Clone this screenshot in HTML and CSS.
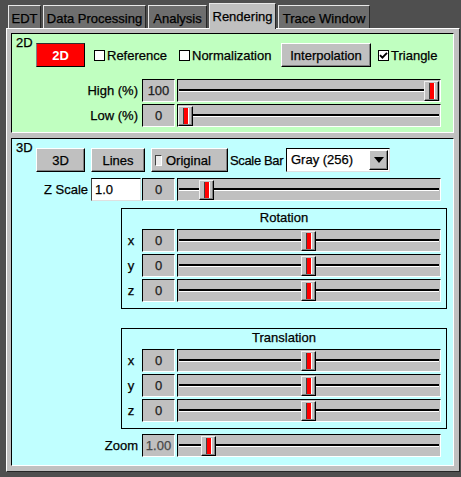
FILE: index.html
```html
<!DOCTYPE html>
<html>
<head>
<meta charset="utf-8">
<title>Rendering</title>
<link rel="stylesheet" href="styles.css">
</head>
<body>
<div class="tabs">
  <div class="tab w-edt">EDT</div>
  <div class="tab w-dp">Data Processing</div>
  <div class="tab w-an">Analysis</div>
  <div class="tab active w-re">Rendering</div>
  <div class="tab w-tw">Trace Window</div>
</div>
<div class="content">
  <section class="panel p2d">
    <div class="toprow">
      <div class="ptitle">2D</div>
      <div class="controls">
        <div class="btn red w-2d">2D</div>
        <label class="chk w-ref"><span class="box"></span>Reference</label>
        <label class="chk w-norm"><span class="box"></span>Normalization</label>
        <div class="btn w-interp">Interpolation</div>
        <label class="chk ml7"><span class="box"><svg width="9" height="9" viewBox="0 0 9 9"><path d="M1 4.2 L3.4 6.6 L8 1.8" fill="none" stroke="#000" stroke-width="1.9"/></svg></span>Triangle</label>
      </div>
    </div>
    <div class="rows mt12">
      <div class="srow">
        <span class="lbl wide">High (%)</span>
        <span class="val">100</span>
        <div class="slider"><div class="track"></div><div class="thumb" style="left:246px"><i></i></div></div>
      </div>
      <div class="srow">
        <span class="lbl wide">Low (%)</span>
        <span class="val">0</span>
        <div class="slider"><div class="track"></div><div class="thumb" style="left:0px"><i></i></div></div>
      </div>
    </div>
  </section>

  <section class="panel p3d">
    <div class="toprow">
      <div class="ptitle">3D</div>
      <div class="controls">
        <div class="btn w-3d">3D</div>
        <div class="btn w-lines ml6">Lines</div>
        <div class="btn w-orig ml6 orig"><span class="ind"></span>Original</div>
        <span class="sblabel">Scale Bar</span>
        <div class="select"><span class="seltext">Gray (256)</span><span class="selbtn"><span class="tri"></span></span></div>
      </div>
    </div>

    <div class="srow mt6">
      <span class="lbl zl">Z Scale</span>
      <span class="input">1.0</span>
      <span class="val">0</span>
      <div class="slider"><div class="track"></div><div class="thumb" style="left:21px"><i></i></div></div>
    </div>

    <div class="group mt7">
      <div class="gtitle">Rotation</div>
      <div class="rows">
        <div class="srow">
          <span class="lbl axis">x</span>
          <span class="val">0</span>
          <div class="slider"><div class="track"></div><div class="thumb" style="left:123px"><i></i></div></div>
        </div>
        <div class="srow">
          <span class="lbl axis">y</span>
          <span class="val">0</span>
          <div class="slider"><div class="track"></div><div class="thumb" style="left:123px"><i></i></div></div>
        </div>
        <div class="srow">
          <span class="lbl axis">z</span>
          <span class="val">0</span>
          <div class="slider"><div class="track"></div><div class="thumb" style="left:123px"><i></i></div></div>
        </div>
      </div>
    </div>

    <div class="group mt19">
      <div class="gtitle">Translation</div>
      <div class="rows">
        <div class="srow">
          <span class="lbl axis">x</span>
          <span class="val">0</span>
          <div class="slider"><div class="track"></div><div class="thumb" style="left:123px"><i></i></div></div>
        </div>
        <div class="srow">
          <span class="lbl axis">y</span>
          <span class="val">0</span>
          <div class="slider"><div class="track"></div><div class="thumb" style="left:123px"><i></i></div></div>
        </div>
        <div class="srow">
          <span class="lbl axis">z</span>
          <span class="val">0</span>
          <div class="slider"><div class="track"></div><div class="thumb" style="left:123px"><i></i></div></div>
        </div>
      </div>
    </div>

    <div class="srow mt5">
      <span class="lbl wide">Zoom</span>
      <span class="val dim">1.00</span>
      <div class="slider"><div class="track"></div><div class="thumb" style="left:23px"><i></i></div></div>
    </div>
  </section>
</div>
</body>
</html>
```

FILE: styles.css
```css
* { box-sizing: border-box; }
html, body { margin: 0; padding: 0; }
body {
  width: 461px;
  height: 477px;
  overflow: hidden;
  background: #4f4f4f;
  font: 13px/15px "Liberation Sans", Arial, sans-serif;
  color: #000;
  -webkit-text-stroke: 0.25px currentColor;
}

/* tabs */
.tabs {
  display: flex;
  align-items: flex-end;
  gap: 2px;
  height: 28px;
  padding-left: 8px;
}
.tab {
  height: 23px;
  padding-top: 5px;
  text-align: center;
  white-space: nowrap;
  background: #6e6e6e;
  border-top: 1px solid #e8e8e8;
  border-left: 1px solid #e8e8e8;
  border-right: 1px solid #262626;
}
.tab.active {
  height: 26px;
  margin-bottom: -1px;
  background: #c0c0c0;
  position: relative;
  z-index: 1;
}
.w-edt { width: 33px; }
.w-dp { width: 103px; }
.w-an { width: 59px; }
.w-re { width: 67px; }
.w-tw { width: 92px; }

/* main content */
.content {
  margin-left: 6px;
  width: 454px;
  height: 444px;
  background: #c0c0c0;
  border: 1px solid;
  border-color: #fff #262626 #262626 #fff;
  padding: 4px 5px 5px 4px;
  display: flex;
  flex-direction: column;
  gap: 5px;
}
.panel {
  width: 443px;
  border: 1px solid;
  border-color: #000 #fff #fff #000;
  flex: none;
}
.p2d { background: #c0ffc0; height: 100px; }
.p3d { background: #c0ffff; height: 328px; }

.toprow { display: flex; align-items: flex-start; }
.ptitle { width: 24px; padding-left: 4px; margin-top: 1px; }
.controls {
  display: flex;
  align-items: center;
  height: 24px;
  margin-top: 9px;
}

/* buttons */
.btn {
  height: 24px;
  display: flex;
  align-items: center;
  justify-content: center;
  white-space: nowrap;
  background: #c0c0c0;
  border: 1px solid;
  border-color: #fff #000 #000 #fff;
  box-shadow: inset -1px -1px #808080;
}
.btn.red {
  background: #ff0000;
  color: #fff;
  font-weight: bold;
  -webkit-text-stroke: 0;
  border-color: #303030 #000 #000 #808080;
  box-shadow: none;
}
.w-2d, .w-3d { width: 49px; }
.w-interp { width: 90px; }
.w-lines { width: 54px; }
.w-orig { width: 77px; }
.ml6 { margin-left: 6px; }
.ml7 { margin-left: 7px; }
.orig { justify-content: flex-start; padding-left: 3px; gap: 4px; }
.ind {
  width: 7px;
  height: 11px;
  background: #ececec;
  border: 1px solid;
  border-color: #404040 #fff #fff #404040;
}

/* checkboxes */
.chk {
  display: flex;
  align-items: center;
  gap: 2px;
  white-space: nowrap;
}
.w-ref { width: 85px; margin-left: 9px; }
.w-norm { width: 102px; }
.box {
  width: 11px;
  height: 11px;
  background: #fff;
  border: 1px solid #000;
  display: flex;
  align-items: center;
  justify-content: center;
}
.box svg { display: block; }

/* scale bar select */
.sblabel { width: 56px; margin-left: 2px; white-space: nowrap; letter-spacing: -0.35px; }
.select {
  width: 104px;
  height: 24px;
  display: flex;
  background: #fff;
  border: 1px solid;
  border-color: #000 #e0e0e0 #e0e0e0 #000;
  padding: 1px;
}
.seltext { flex: 1; padding-left: 3px; line-height: 20px; white-space: nowrap; }
.selbtn {
  width: 19px;
  background: #c0c0c0;
  border: 1px solid;
  border-color: #fff #000 #000 #fff;
  box-shadow: inset -1px -1px #808080;
  display: flex;
  align-items: center;
  justify-content: center;
}
.tri {
  width: 0;
  height: 0;
  border-left: 5px solid transparent;
  border-right: 5px solid transparent;
  border-top: 6px solid #000;
}

/* slider rows */
.rows { display: flex; flex-direction: column; gap: 2px; }
.mt5 { margin-top: 5px; }
.mt6 { margin-top: 6px; }
.mt7 { margin-top: 7px; }
.mt12 { margin-top: 12px; }
.mt19 { margin-top: 19px; }

.srow { display: flex; height: 23px; }
.lbl { line-height: 23px; white-space: nowrap; }
.lbl.wide { width: 126px; text-align: right; margin-right: 4px; }
.lbl.zl { width: 76px; text-align: right; margin-right: 3px; }
.lbl.axis { width: 18px; text-align: center; margin-right: 2px; }

.val {
  width: 33px;
  line-height: 21px;
  text-align: center;
  background: #c0c0c0;
  color: #202020;
  border: 1px solid;
  border-color: #000 #fff #fff #000;
  margin-right: 2px;
}
.val.dim { color: #484848; }

.input {
  width: 50px;
  line-height: 21px;
  padding-left: 3px;
  background: #fff;
  border: 1px solid;
  border-color: #000 #e0e0e0 #e0e0e0 #404040;
  margin-right: 1px;
}

.slider {
  position: relative;
  width: 264px;
  background: #c0c0c0;
  border: 1px solid;
  border-color: #000 #fff #fff #000;
  padding: 9px 1px 0;
}
.track {
  height: 3px;
  background: #000;
  border-bottom: 1px solid #fff;
}
.thumb {
  position: absolute;
  top: 1px;
  width: 15px;
  height: 20px;
  background: #c0c0c0;
  border: 1px solid;
  border-color: #f0f0f0 #000 #000 #f0f0f0;
  box-shadow: inset -1px -1px #808080;
  padding: 1px 0 0 4px;
}
.thumb i {
  display: block;
  width: 6px;
  height: 16px;
  background: #ff0000;
  border-left: 1px solid #404040;
  border-right: 1px solid #fff;
}

/* group boxes */
.group {
  width: 326px;
  margin-left: 109px;
  border: 1px solid #000;
  padding-bottom: 6px;
}
.gtitle { height: 20px; line-height: 17px; text-align: center; }
```
